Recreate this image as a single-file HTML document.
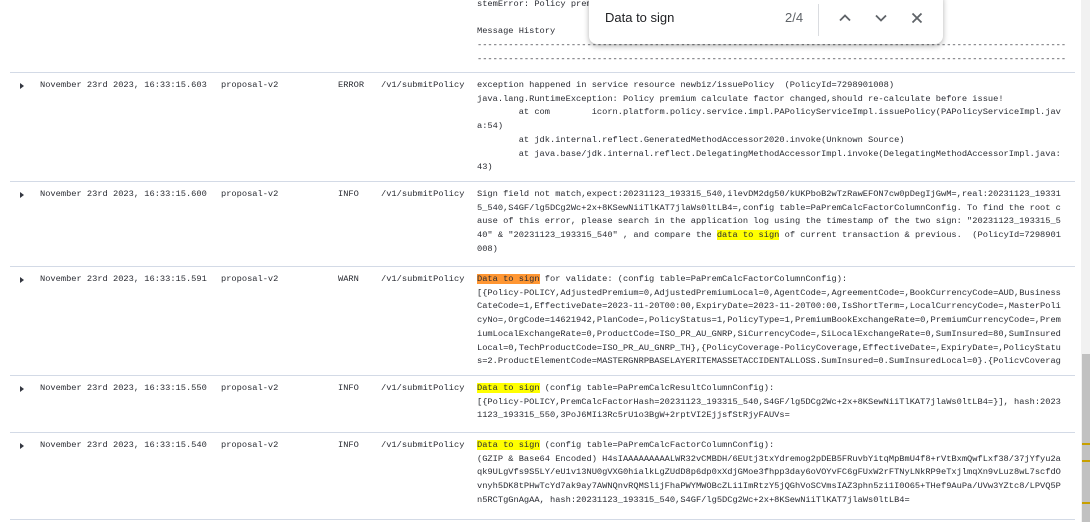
<!DOCTYPE html>
<html><head><meta charset="utf-8"><style>
body{margin:0;width:1090px;height:522px;overflow:hidden;background:#fff;position:relative;font-family:"Liberation Mono",monospace;font-size:8.7px;color:#2a2c33}
.t{position:absolute;white-space:pre;line-height:13.7px}
.hr{position:absolute;left:10px;width:1065px;height:1px;background:#d3dae6}
.msg{position:absolute;left:477px;width:590px;white-space:pre;line-height:13.7px;overflow:hidden}
.y{background:#ffff00}.o{background:#ff9632}
.ar{position:absolute;left:20px;width:0;height:0;border-left:4px solid #343741;border-top:3px solid transparent;border-bottom:3px solid transparent}
</style></head><body>
<div class="msg" style="top:-2px">stemError: Policy premium calculate factor changed

Message History
-----------------------------------------------------------------------------------------------------------------
-----------------------------------------------------------------------------------------------------------------</div>
<div class="hr" style="top:72px"></div>
<div class="ar" style="top:83px"></div>
<div class="t" style="left:40px;top:79px">November 23rd 2023, 16:33:15.603</div>
<div class="t" style="left:221px;top:79px">proposal-v2</div>
<div class="t" style="left:338px;top:79px">ERROR</div>
<div class="t" style="left:381px;top:79px">/v1/submitPolicy</div>
<div class="msg" style="top:79px">exception happened in service resource newbiz/issuePolicy  (PolicyId=7298901008)
java.lang.RuntimeException: Policy premium calculate factor changed,should re-calculate before issue!
        at com        icorn.platform.policy.service.impl.PAPolicyServiceImpl.issuePolicy(PAPolicyServiceImpl.jav
a:54)
        at jdk.internal.reflect.GeneratedMethodAccessor2020.invoke(Unknown Source)
        at java.base/jdk.internal.reflect.DelegatingMethodAccessorImpl.invoke(DelegatingMethodAccessorImpl.java:
43)</div>
<div class="hr" style="top:181px"></div>
<div class="ar" style="top:192px"></div>
<div class="t" style="left:40px;top:188px">November 23rd 2023, 16:33:15.600</div>
<div class="t" style="left:221px;top:188px">proposal-v2</div>
<div class="t" style="left:338px;top:188px">INFO</div>
<div class="t" style="left:381px;top:188px">/v1/submitPolicy</div>
<div class="msg" style="top:188px">Sign field not match,expect:20231123_193315_540,ilevDM2dg50/kUKPboB2wTzRawEFON7cw0pDegIjGwM=,real:20231123_19331
5_540,S4GF/lg5DCg2Wc+2x+8KSewNiiTlKAT7jlaWs0ltLB4=,config table=PaPremCalcFactorColumnConfig. To find the root c
ause of this error, please search in the application log using the timestamp of the two sign: "20231123_193315_5
40" &amp; "20231123_193315_540" , and compare the <span class="y">data to sign</span> of current transaction &amp; previous.  (PolicyId=7298901
008)</div>
<div class="hr" style="top:266px"></div>
<div class="ar" style="top:277px"></div>
<div class="t" style="left:40px;top:273px">November 23rd 2023, 16:33:15.591</div>
<div class="t" style="left:221px;top:273px">proposal-v2</div>
<div class="t" style="left:338px;top:273px">WARN</div>
<div class="t" style="left:381px;top:273px">/v1/submitPolicy</div>
<div class="msg" style="top:273px;height:95px"><span class="o">Data to sign</span> for validate: (config table=PaPremCalcFactorColumnConfig):
[{Policy-POLICY,AdjustedPremium=0,AdjustedPremiumLocal=0,AgentCode=,AgreementCode=,BookCurrencyCode=AUD,Business
CateCode=1,EffectiveDate=2023-11-20T00:00,ExpiryDate=2023-11-20T00:00,IsShortTerm=,LocalCurrencyCode=,MasterPoli
cyNo=,OrgCode=14621942,PlanCode=,PolicyStatus=1,PolicyType=1,PremiumBookExchangeRate=0,PremiumCurrencyCode=,Prem
iumLocalExchangeRate=0,ProductCode=ISO_PR_AU_GNRP,SiCurrencyCode=,SiLocalExchangeRate=0,SumInsured=80,SumInsured
Local=0,TechProductCode=ISO_PR_AU_GNRP_TH},{PolicyCoverage-PolicyCoverage,EffectiveDate=,ExpiryDate=,PolicyStatu
s=2.ProductElementCode=MASTERGNRPBASELAYERITEMASSETACCIDENTALLOSS.SumInsured=0.SumInsuredLocal=0}.{PolicvCoverag</div>
<div class="hr" style="top:375px"></div>
<div class="ar" style="top:386px"></div>
<div class="t" style="left:40px;top:382px">November 23rd 2023, 16:33:15.550</div>
<div class="t" style="left:221px;top:382px">proposal-v2</div>
<div class="t" style="left:338px;top:382px">INFO</div>
<div class="t" style="left:381px;top:382px">/v1/submitPolicy</div>
<div class="msg" style="top:382px"><span class="y">Data to sign</span> (config table=PaPremCalcResultColumnConfig):
[{Policy-POLICY,PremCalcFactorHash=20231123_193315_540,S4GF/lg5DCg2Wc+2x+8KSewNiiTlKAT7jlaWs0ltLB4=}], hash:2023
1123_193315_550,3PoJ6MIi3Rc5rU1o3BgW+2rptVI2EjjsfStRjyFAUVs=</div>
<div class="hr" style="top:432px"></div>
<div class="ar" style="top:443px"></div>
<div class="t" style="left:40px;top:439px">November 23rd 2023, 16:33:15.540</div>
<div class="t" style="left:221px;top:439px">proposal-v2</div>
<div class="t" style="left:338px;top:439px">INFO</div>
<div class="t" style="left:381px;top:439px">/v1/submitPolicy</div>
<div class="msg" style="top:439px"><span class="y">Data to sign</span> (config table=PaPremCalcFactorColumnConfig):
(GZIP &amp; Base64 Encoded) H4sIAAAAAAAAALWR32vCMBDH/6EUtj3txYdremog2pDEB5FRuvbYitqMpBmU4f8+rVtBxmQwfLxf38/37jYfyu2a
qk9ULgVfs9S5LY/eU1v13NU0gVXG0hialkLgZUdD8p6dp0xXdjGMoe3fhpp3day6oVOYvFC6gFUxW2rFTNyLNkRP9eTxjlmqXn9vLuz8wL7scfdO
vnyh5DK8tPHwTcYd7ak9ay7AWNQnvRQMSlijFhaPWYMWOBcZLi1ImRtzY5jQGhVoSCVmsIAZ3phn5zi1I0O65+THef9AuPa/UVw3YZtc8/LPVQ5P
n5RCTgGnAgAA, hash:20231123_193315_540,S4GF/lg5DCg2Wc+2x+8KSewNiiTlKAT7jlaWs0ltLB4=</div>
<div class="hr" style="top:519px"></div>
<!-- scrollbar -->
<div style="position:absolute;left:1081px;top:0;width:9px;height:522px;background:#f1f1f1"></div>
<div style="position:absolute;left:1082px;top:354px;width:8px;height:168px;background:#c1c1c1"></div>
<div style="position:absolute;left:1082px;top:443px;width:8px;height:2px;background:#c8a000"></div>
<div style="position:absolute;left:1082px;top:460px;width:8px;height:2px;background:#c8a000"></div>
<div style="position:absolute;left:1082px;top:502px;width:8px;height:2px;background:#c8a000"></div>
<!-- find bar -->
<div style="position:absolute;left:589px;top:-8px;width:354px;height:52px;background:#fff;border-radius:8px;box-shadow:0 2px 6px rgba(0,0,0,.3);font-family:'Liberation Sans',sans-serif">
<div style="position:absolute;left:16px;top:18px;font-size:13px;color:#202124">Data to sign</div>
<div style="position:absolute;left:196px;top:18px;font-size:13px;color:#5f6368">2/4</div>
<div style="position:absolute;left:229px;top:12px;width:1px;height:32px;background:#dadce0"></div>
<svg style="position:absolute;left:248px;top:18px" width="16" height="16" viewBox="0 0 16 16"><path d="M3 10.5L8 5.5L13 10.5" stroke="#5f6368" stroke-width="1.8" fill="none"/></svg>
<svg style="position:absolute;left:284px;top:18px" width="16" height="16" viewBox="0 0 16 16"><path d="M3 5.5L8 10.5L13 5.5" stroke="#5f6368" stroke-width="1.8" fill="none"/></svg>
<svg style="position:absolute;left:320px;top:18px" width="16" height="16" viewBox="0 0 16 16"><path d="M3.5 3.5L12.5 12.5M12.5 3.5L3.5 12.5" stroke="#5f6368" stroke-width="1.8" fill="none"/></svg>
</div>
</body></html>
